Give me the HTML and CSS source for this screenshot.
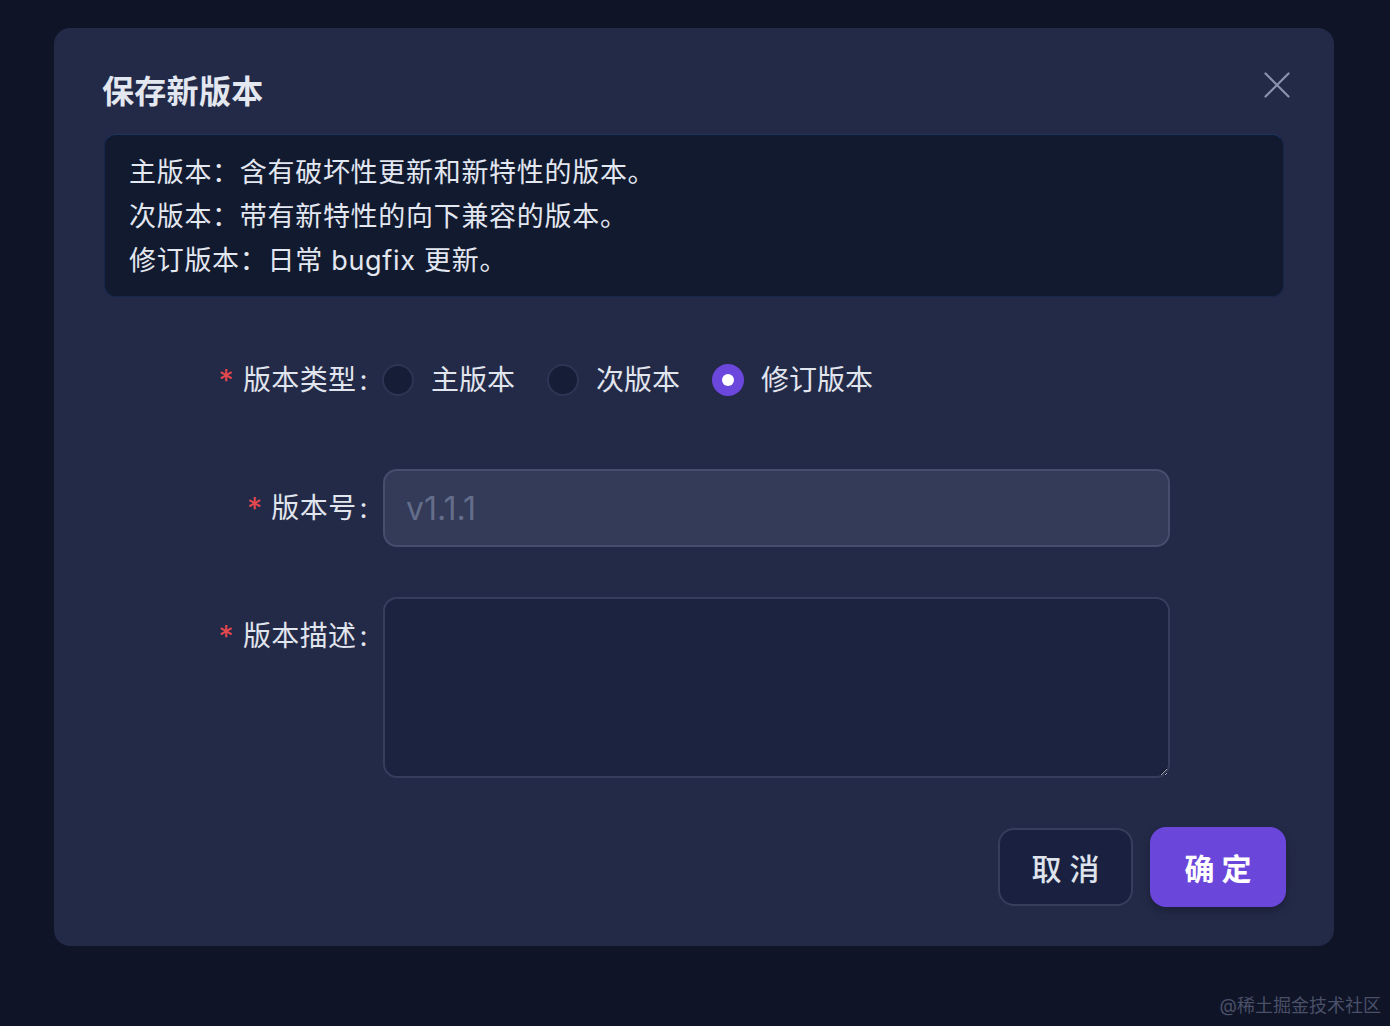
FILE: index.html
```html
<!DOCTYPE html>
<html lang="zh-CN">
<head>
<meta charset="utf-8">
<title>保存新版本</title>
<link rel="stylesheet" href="styles.css">
</head>
<body>
<div class="page">
  <div class="modal">
    <div class="modal-header">
      <h2 class="modal-title">保存新版本</h2>
      <button class="close-btn" aria-label="关闭">
        <svg width="26" height="26" viewBox="0 0 26 26"><path d="M1.5 1.5 L24.5 24.5 M24.5 1.5 L1.5 24.5" stroke="#8a93ab" stroke-width="2.2" stroke-linecap="round" fill="none"/></svg>
      </button>
    </div>
    <div class="info-box">
      <p>主版本：含有破坏性更新和新特性的版本。</p>
      <p>次版本：带有新特性的向下兼容的版本。</p>
      <p>修订版本：日常 bugfix 更新。</p>
    </div>
    <form class="form">
      <div class="form-row row-radio">
        <label class="form-label"><span class="req">*</span>版本类型<span class="colon">:</span></label>
        <div class="radio-group">
          <span class="radio"><span class="radio-circle"></span><span class="radio-text">主版本</span></span>
          <span class="radio"><span class="radio-circle"></span><span class="radio-text">次版本</span></span>
          <span class="radio"><span class="radio-circle checked"></span><span class="radio-text">修订版本</span></span>
        </div>
      </div>
      <div class="form-row row-input">
        <label class="form-label"><span class="req">*</span>版本号<span class="colon">:</span></label>
        <input class="text-input" type="text" value="v1.1.1" disabled>
      </div>
      <div class="form-row row-textarea">
        <label class="form-label label-top"><span class="req">*</span>版本描述<span class="colon">:</span></label>
        <textarea class="text-area"></textarea>
      </div>
    </form>
    <div class="modal-footer">
      <button class="btn btn-cancel" type="button">取 消</button>
      <button class="btn btn-primary" type="button">确 定</button>
    </div>
  </div>
  <div class="watermark">@稀土掘金技术社区</div>
</div>
</body>
</html>
```

FILE: styles.css
```css
* { box-sizing: border-box; }
html, body {
  margin: 0;
  padding: 0;
  background: #0f1427;
}
body {
  font-family: "Inter", "Noto Sans CJK SC", sans-serif;
  color: #e1e5ee;
}
.page {
  width: 1390px;
  height: 1026px;
  padding: 28px 0 0 54px;
  display: flex;
  flex-direction: column;
}
.modal {
  width: 1280px;
  height: 918px;
  background: #232a48;
  border-radius: 16px;
  padding: 44px 50px 39px 50px;
  display: flex;
  flex-direction: column;
}
.modal-header {
  display: flex;
  justify-content: space-between;
  align-items: flex-start;
  height: 40px;
}
.modal-title {
  margin: 0 0 0 -2px;
  font-size: 32px;
  line-height: 40px;
  font-weight: 700;
  color: #e3e7f0;
  letter-spacing: 0.3px;
}
.close-btn {
  background: none;
  border: 0;
  padding: 0;
  margin: 0 -6px 0 0;
  width: 26px;
  height: 26px;
  display: flex;
}
.info-box {
  margin-top: 22px;
  height: 163px;
  background: #121a30;
  border: 1px solid #17264a;
  border-top-color: #1b3560;
  border-radius: 12px;
  padding: 16px 24px 14px;
  font-size: 27px;
  line-height: 44px;
  letter-spacing: 0.7px;
  color: #e3e7f0;
}
.info-box p { margin: 0; }
.form {
  display: flex;
  flex-direction: column;
}
.form-row {
  display: grid;
  grid-template-columns: 279px 787px;
  align-items: center;
}
.row-radio { margin-top: 61px; height: 44px; }
.row-input { margin-top: 67px; height: 78px; }
.row-textarea { margin-top: 50px; height: 181px; align-items: start; }
.form-label {
  display: flex;
  justify-content: flex-end;
  align-items: center;
  padding-right: 15px;
  font-size: 28px;
  line-height: 40px;
  letter-spacing: 0.4px;
  color: #e1e5ee;
}
.label-top { margin-top: 19px; }
.req {
  color: #e5484d;
  margin-right: 9px;
  font-size: 30px;
  position: relative;
  top: 0px;
}
.colon { margin-left: 3px; }
.radio-group {
  display: flex;
  align-items: center;
  gap: 32px;
  margin-left: -1px;
}
.radio {
  display: flex;
  align-items: center;
}
.radio-circle {
  width: 32px;
  height: 32px;
  border-radius: 50%;
  background: #161d37;
  border: 2px solid #2d3554;
}
.radio-circle.checked {
  background: #6c47dd;
  border-color: #6c47dd;
  display: flex;
  align-items: center;
  justify-content: center;
}
.radio-circle.checked::after {
  content: "";
  width: 12px;
  height: 12px;
  border-radius: 50%;
  background: #ffffff;
}
.radio-text {
  margin-left: 17px;
  font-size: 28px;
  line-height: 40px;
  color: #e1e5ee;
}
.text-input {
  width: 787px;
  height: 78px;
  background: #333b59;
  border: 2px solid #464e6d;
  border-radius: 14px;
  padding: 0 21px;
  font-family: "Inter", "Noto Sans CJK SC", sans-serif;
  font-size: 32px;
  color: #646d8a;
  -webkit-text-fill-color: #646d8a;
  opacity: 1;
}
.text-area {
  width: 787px;
  height: 181px;
  background: #1b2340;
  border: 2px solid #363e5d;
  border-radius: 14px;
  resize: vertical;
  color-scheme: dark;
  font-family: "Inter", "Noto Sans CJK SC", sans-serif;
  font-size: 26px;
  color: #e1e5ee;
  padding: 12px 20px;
  outline: none;
}
.modal-footer {
  margin-top: 49px;
  display: flex;
  justify-content: flex-end;
  align-items: center;
  gap: 17px;
  margin-right: -2px;
}
.btn {
  font-family: "Inter", "Noto Sans CJK SC", sans-serif;
  font-size: 30px;
  border-radius: 16px;
  cursor: pointer;
}
.btn-cancel {
  width: 135px;
  height: 78px;
  background: #1a2140;
  border: 2px solid #363e5c;
  color: #dfe3ec;
  font-weight: 500;
}
.btn-primary {
  width: 136px;
  height: 80px;
  background: #6b46db;
  border: 0;
  color: #ffffff;
  font-weight: 700;
  box-shadow: 0 4px 10px rgba(0, 0, 0, 0.25);
}
.watermark {
  align-self: flex-end;
  margin-right: 9px;
  margin-top: 48px;
  font-size: 18px;
  line-height: 24px;
  color: #4a5068;
}
```
